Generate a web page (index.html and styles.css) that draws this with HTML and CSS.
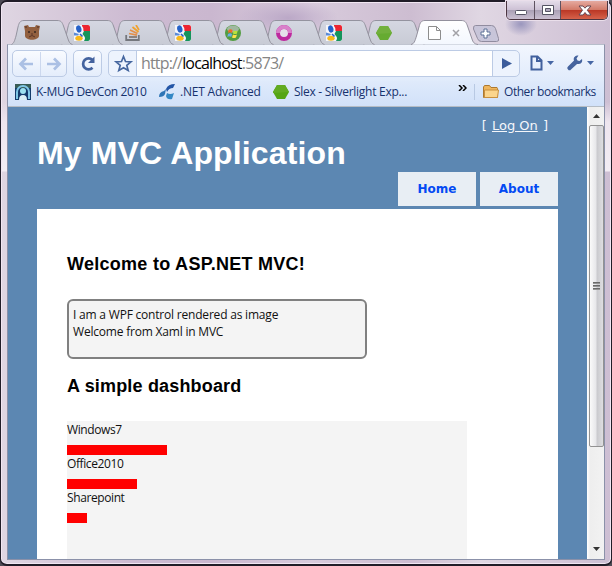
FILE: index.html
```html
<!DOCTYPE html>
<html lang="en">
<head>
<meta charset="utf-8">
<title>My MVC Application</title>
<link rel="stylesheet" href="styles.css">
</head>
<body>
<svg class="defs" width="0" height="0">
  <defs>
    <linearGradient id="tabFill" x2="0" y2="1"><stop stop-color="#d5d7e2"/><stop offset="1" stop-color="#c8cbd5"/></linearGradient>
    <linearGradient id="activeFill" x2="0" y2="1"><stop stop-color="#fff"/><stop offset="1" stop-color="#f3f7fe"/></linearGradient>
    <symbol id="tab" viewBox="0 0 62 25"><path d="M.5 24.5C3 23 3.500 21 5 16L7 7C8 3 9 .5 13 .5H46C50 .5 51 2 52.500 6L57 19C58 22 59 24 61.500 24.500" fill="url(#tabFill)" stroke="#94939f"/></symbol>
    <symbol id="google" viewBox="0 0 16 16"><path fill="#f4f5fa" d="M0 0h16v16H0z"/><path fill="#ed2430" d="M8 0h6a2 2 0 0 1 2 2v4H9.500Q10 3 8 1z"/><path fill="#16945b" d="M10 6h6v8a2 2 0 0 1-2 2h-4q2-3 0-5L8.500 9z"/><path fill="#5b8bd6" d="M0 7.500L5 9 4 10.500H0z"/><ellipse cx="4.800" cy="4" rx="2.600" ry="3.700" transform="rotate(-15 4.800 4)" fill="#2462c9"/><ellipse cx="5" cy="13.200" rx="3.700" ry="2.500" fill="#f8b819"/><path d="M6 9l2.500 2.500" stroke="#2462c9" stroke-width="1.600"/></symbol>
    <symbol id="hex" viewBox="0 0 16 16"><path d="M4 1h8l4 7-4 7H4L0 8z" fill="#55a514"/><path d="M4 1h8l4 7L0 9V8z" fill="#62ab22"/></symbol>
  </defs>
</svg>
<div class="window">
  <div class="controls">
    <span class="ctl"><svg width="27" height="18"><rect x="8.500" y="9.500" width="11" height="4" rx="1" fill="#fff" stroke="#555463"/></svg></span>
    <span class="ctl mid"><svg width="25" height="18"><path d="M7.500 4.500h11v9h-11z" fill="#fff" stroke="#555463"/><path d="M10.500 7.500h5v3h-5z" fill="#b0a8bd" stroke="#555463"/></svg></span>
    <span class="ctl close"><svg width="46" height="18"><path d="M18 5h4l2 2.200L26 5h4l-3.700 4.200L30 14h-4l-2-2.500L22 14h-4l3.500-4.800z" fill="#fff" stroke="#654653"/></svg></span>
  </div>
  <div class="tabs">
    <div class="tab t1"><svg class="shape"><use href="#tab"/></svg><svg class="icon" viewBox="0 0 16 16"><path d="M0 1l4-1 1 2h6l1-2 4 1-1 5v5c-1 5-13 5-14 0V6z" fill="#92603f"/><path d="M1 2h2M13 2h2" stroke="#4e3228"/><circle cx="5" cy="7" r="1" fill="#392720"/><circle cx="11" cy="7" r="1" fill="#392720"/><path d="M5 12q3-3 6 0M7 9h2" fill="none" stroke="#5a3428"/></svg></div>
    <div class="tab t2"><svg class="shape"><use href="#tab"/></svg><svg class="icon"><use href="#google"/></svg></div>
    <div class="tab t3"><svg class="shape"><use href="#tab"/></svg><svg class="icon" viewBox="0 0 16 16"><path d="M1.200 10v5h12.600v-5" fill="none" stroke="#75777d" stroke-width="1.800"/><path d="M4 12h8" stroke="#8c827c" stroke-width="2"/><path d="M4 8.500l8 1.700M5 5l7.500 3.500" stroke="#e4904a" stroke-width="1.700"/><path d="M7.500 2l6 5M11 0l3 5" stroke="#f0a12d" stroke-width="1.700"/></svg></div>
    <div class="tab t4"><svg class="shape"><use href="#tab"/></svg><svg class="icon"><use href="#google"/></svg></div>
    <div class="tab t5"><svg class="shape"><use href="#tab"/></svg><svg class="icon" viewBox="0 0 16 16"><circle cx="8" cy="8" r="8" fill="#549d42"/><ellipse cx="8" cy="4" rx="6" ry="3.500" fill="#a0b8a0"/><path d="M3.500 5q2-1.500 4 0L7 8q-2-1.300-4 0z" fill="#ef6a28"/><path d="M8.500 5.500q2 1 4 0L12 8.500q-2 1-4 0z" fill="#b9e33a"/><path d="M3 9q2-1.500 4 0l-.7 3q-2-1.300-4 0z" fill="#6aace8"/><path d="M8 9.500q2 1 4 0l-1 3q-2 1-4 0z" fill="#fde14c"/></svg></div>
    <div class="tab t6"><svg class="shape"><use href="#tab"/></svg><svg class="icon" viewBox="0 0 16 16"><circle cx="8" cy="8" r="6" fill="#e5e0ea" stroke="#bd299e" stroke-width="4"/><path d="M2 8a6 6 0 0 1 12 0" fill="none" stroke="#d980ca" stroke-width="4"/></svg></div>
    <div class="tab t7"><svg class="shape"><use href="#tab"/></svg><svg class="icon"><use href="#google"/></svg></div>
    <div class="tab t8"><svg class="shape"><use href="#tab"/></svg><svg class="icon faded"><use href="#hex"/></svg></div>
    <div class="tab active"><svg class="shape" viewBox="0 0 67 25"><path d="M0 24.500C3 24 4 21 5.500 16L8 7C9 3 10 .5 14 .5H50C54 .5 55 2 56.500 6L61 19C62 22 63 24 67 24.500" fill="url(#activeFill)" stroke="#92909d"/></svg><svg class="icon" viewBox="0 0 16 16"><path d="M2.500 1.500h8l4 4v9h-12zM10.500 1.500v4h4" fill="#fff" stroke="#8d8d8d"/></svg><svg class="x" viewBox="0 0 8 8"><path d="M1 1l6 6M7 1L1 7" stroke="#a2a2a7" stroke-width="1.500"/></svg></div>
    <svg class="plus" viewBox="0 0 26 17"><path d="M2.500.5h16q3 0 4 3l3 10q1 3-2 3h-15q-3 0-4-3L.5 4Q0 .5 2.500.5z" fill="#c8c5d9" stroke="#918c9f"/><path d="M11 4h3v3h3v3h-3v3h-3v-3H8V7h3z" fill="#fff" stroke="#5c7196"/></svg>
  </div>
  <div class="client">
    <div class="toolbar">
      <div class="button nav"><svg width="55" height="26"><path d="M27.500 1v24" stroke="#ccd8ee"/><path d="M20 13H8M13 7.500L7.500 13l5.500 5.500M34 13h12M41 7.500l5.500 5.500-5.500 5.500" fill="none" stroke="#abc0e4" stroke-width="2.700"/></svg></div>
      <div class="button reload"><svg width="28" height="26"><path d="M18.500 16.800A5.500 5.500 0 1 1 18.500 9" fill="none" stroke="#44639f" stroke-width="2.700"/><path d="M20.500 5.500V12H14z" fill="#44639f"/></svg></div>
      <div class="omnibox">
        <span class="star"><svg width="28" height="25"><path d="M14.500 5.500l2 5 5.500.3-4.200 3.600 1.400 5.100-4.700-2.800-4.700 2.800 1.400-5.100L7 10.800l5.500-.3z" fill="none" stroke="#46679f" stroke-width="1.700"/></svg></span>
        <span class="url"><i>http://</i><b>localhost</b><i>:5873/</i></span>
        <span class="go"><svg width="27" height="25"><path d="M9 7l10 5.500L9 18z" fill="#3c5c9b"/></svg></span>
      </div>
      <svg class="menus" width="70" height="26"><path d="M5.500 6.500h6l4 4v9h-10zM11 7v4h4.500" fill="none" stroke="#41609d" stroke-width="2"/><path d="M21 11h7l-3.500 4z" fill="#4767a5"/><path d="M42 19.500a2 2 0 0 1 0-3l6-6c-1-3 1-5 4.500-5l-2 3 1 2 2 .5 2.500-2c1 4-2 5.500-5 5l-6 5.500a2 2 0 0 1-3 0z" fill="#45639e"/><path d="M61 11h7l-3.500 4z" fill="#4767a5"/></svg>
    </div>
    <div class="bookmarks">
      <span class="mark m1"><svg viewBox="0 0 16 16"><path d="M0 0h16v16H0z" fill="#143b6b"/><path d="M0 0h16v4H0z" fill="#385c56"/><path d="M2 15V8a6 6 0 0 1 12 0v7" fill="none" stroke="#7ec6e5" stroke-width="2"/><circle cx="8" cy="7" r="3" fill="#9ce2ef"/><path d="M4 16q0-5 4-5t4 5z" fill="#d9eff5"/></svg><span>K-MUG DevCon 2010</span></span>
      <span class="mark m2"><svg viewBox="0 0 16 16"><path d="M7 5Q9 0 16 0l-2 4q-4 0-6 4z" fill="#2456a6"/><path d="M0 13q0-5 5-6l2-2-1 5q-1 3-6 3z" fill="#2e75b6"/><path d="M8 9q3 2 7 0l-2 6q-5 1-6-3z" fill="#3488c5"/></svg><span>.NET Advanced</span></span>
      <span class="mark m3"><svg><use href="#hex"/></svg><span>Slex - Silverlight Exp...</span></span>
      <svg class="more" viewBox="0 0 9 6"><path d="M1 0l3 3-3 3M5 0l3 3-3 3" fill="none" stroke="#000" stroke-width="1.500"/></svg>
      <span class="mark other"><svg viewBox="0 0 16 16"><path d="M.5 13.500V3l1-1.500h5L8 3.500h6l.5 1v9z" fill="#efb65d" stroke="#ad7930"/><path d="M1.500 13.500V6H15.500l-1 7.500z" fill="#fbd58d" stroke="#c9903f"/></svg><span>Other bookmarks</span></span>
    </div>
    <div class="view">
      <div class="page">
        <div class="login">[ <a>Log On</a> ]</div>
        <h1>My MVC Application</h1>
        <nav><a>Home</a><a>About</a></nav>
        <main>
          <h2>Welcome to ASP.NET MVC!</h2>
          <div class="control"><div>I am a WPF control rendered as image</div><div>Welcome from Xaml in MVC</div></div>
          <h2 class="sub">A simple dashboard</h2>
          <div class="chart">
            <div class="row">Windows7<div class="bar" style="width:100px"></div></div>
            <div class="row">Office2010<div class="bar" style="width:70px"></div></div>
            <div class="row">Sharepoint<div class="bar" style="width:20px"></div></div>
          </div>
        </main>
      </div>
      <div class="scroll">
        <svg class="arrow" viewBox="0 0 7 4"><path d="M0 4l3.500-4L7 4z" fill="#333"/></svg>
        <div class="thumb"><i></i><i></i><i></i></div>
        <svg class="arrow down" viewBox="0 0 7 4"><path d="M0 0h7L3.500 4z" fill="#333"/></svg>
      </div>
    </div>
  </div>
</div>
</body>
</html>
```
FILE: styles.css
```css
* { box-sizing: border-box; }
body { margin: 0; width: 612px; height: 566px; overflow: hidden; background: #4e4b55; font-family: "Open Sans", "Noto Sans", sans-serif; }
svg { display: block; flex: none; }
.defs { position: absolute; }
.window {
  position: relative; width: 612px; height: 566px; padding: 19px 6px 6px;
  border: 1px solid #211d28; border-top-width: 2px; border-bottom-width: 2px; border-radius: 7px;
  box-shadow: inset 0 0 0 1px #f1e6f2;
  background:
    radial-gradient(ellipse 22px 12px at 359px 66px, #8e88b5, transparent),
    radial-gradient(ellipse 50px 18px at 287px 16px, #bba8c7, transparent),
    radial-gradient(ellipse 16px 12px at 520px 22px, #9a96bd, transparent),
    linear-gradient(180deg, transparent 100px, #eee5ee 120px, #f3edf4 169px, transparent 170px),
    linear-gradient(90deg, #dfd6e2, #cdbbd2 130px, #cab7cf 210px, #d8cbdc 310px, #cdbdd1 410px, #e0d7e3 480px, #cdbed3);
}
.controls { position: absolute; right: 3px; top: -1px; display: flex; border: 1px solid #4b3541; border-top: 0; border-radius: 0 0 5px 5px; overflow: hidden; height: 19px; box-shadow: 0 0 0 1px #eadfeb; }
.ctl { background: linear-gradient(#e4dce9, #ccc0d4 50%, #aaa0b5 51%, #cabfd1); }
.mid { border-left: 1px solid #5e5260; border-right: 1px solid #5e5260; }
.close { background: linear-gradient(#e5aaa0, #d27867 50%, #ba3725 51%, #d6624b); }
.tabs { display: flex; height: 25px; padding-left: 4px; margin-top: -1px; position: relative; }
.tab { position: relative; width: 62px; height: 25px; flex: none; margin-right: -11.700px; padding: 5px 0 0 13px; }
.shape { position: absolute; left: 0; top: 0; width: 100%; height: 25px; }
.icon { position: relative; width: 16px; height: 16px; }
.faded { opacity: .85; }
.t1 { z-index: 9; } .t2 { z-index: 8; } .t3 { z-index: 7; } .t4 { z-index: 6; }
.t5 { z-index: 5; } .t6 { z-index: 4; } .t7 { z-index: 3; } .t8 { z-index: 2; }
.active { z-index: 10; width: 67px; display: flex; gap: 10px; margin-left: -3px; margin-right: -4px; padding-left: 15px; }
.x { position: relative; width: 8px; height: 8px; margin-top: 4px; }
.plus { width: 26px; height: 17px; margin: 5px 0 0 -1px; }
.client { height: 516px; margin-top: -1px; border: 1px solid #8b91a9; border-top-color: #b7bdca; background: #d3e3fa; }
.toolbar { display: flex; height: 36px; padding: 5px 0 0 4px; background: linear-gradient(#f2f6fe, #e0ebfb); }
.button { height: 27px; border: 1px solid #bccbe5; border-radius: 5px; background: linear-gradient(#f9fbff, #e4edfb); }
.nav { width: 55px; margin-right: 6px; }
.reload { width: 29px; margin-right: 6px; }
.omnibox { display: flex; width: 412px; height: 27px; border: 1px solid #bccbe5; border-radius: 5px; overflow: hidden; background: #edf3fd; }
.star { width: 28px; border-right: 1px solid #bccbe5; }
.url { flex: 1; background: #fff; padding-left: 4px; font-size: 16px; line-height: 25px; letter-spacing: -.83px; white-space: nowrap; }
.url i { font-style: normal; color: #858585; }
.url b { font-weight: 400; color: #000; }
.go { width: 27px; border-left: 1px solid #bccbe5; }
.menus { margin-left: 6px; }
.bookmarks { display: flex; align-items: center; height: 25px; padding: 0 0 4px 7px; background: linear-gradient(#dfeafb, #d1e1f9); color: #16326e; font-size: 12px; line-height: 16px; white-space: nowrap; }
.mark { display: flex; gap: 5px; }
.mark svg { width: 16px; height: 16px; }
.m1 { width: 144px; letter-spacing: -.36px; }
.m2 { width: 114px; letter-spacing: -.2px; }
.m3 { width: 185px; letter-spacing: -.28px; }
.more { width: 9px; height: 6px; margin-bottom: 8px; margin-right: 7px; }
.other { border-left: 1px solid #b8c9e3; padding-left: 8px; letter-spacing: -.45px; }
.view { display: flex; height: 453px; border-top: 1px solid #b5bcc4; }
.page { width: 579px; height: 452px; padding: 0 29px; background: #5c87b2; overflow: hidden; }
.login { height: 28px; padding: 10px 10px 0 0; text-align: right; color: #f4f6fa; font: 13px/18px "DejaVu Sans", sans-serif; }
.login a { text-decoration: underline; margin: 0 1px; }
h1 { height: 37px; margin: 0; color: #fff; font: bold 32px/37px "Liberation Sans", sans-serif; letter-spacing: .14px; }
nav { display: flex; justify-content: flex-end; gap: 4px; height: 34px; }
nav a { width: 78px; background: #e8eef4; color: #034af3; text-align: center; font: bold 12px/35px "DejaVu Sans", sans-serif; }
main { height: 351px; margin-top: 3px; padding: 44px 30px 0; background: #fff; }
h2 { margin: 0; height: 22px; color: #000; font: bold 18px/22px "Liberation Sans", sans-serif; letter-spacing: .28px; white-space: nowrap; }
.sub { letter-spacing: .17px; }
.control { width: 300px; height: 60px; margin: 24px 0 16px; padding: 5px 4px; border: 2px solid #808080; border-radius: 6px; background: #f4f4f4; color: #111; font-size: 12px; line-height: 17px; letter-spacing: -.2px; }
.chart { width: 400px; height: 139px; margin-top: 24px; background: #f4f4f4; color: #111; font-size: 12px; letter-spacing: -.4px; }
.row { height: 34px; line-height: 18px; }
.bar { height: 10px; margin-top: 6px; background: #f00; }
.scroll { width: 17px; padding-left: 1px; display: flex; flex-direction: column; align-items: center; background: linear-gradient(90deg, #fff, #eee 3px, #f2f2f2); }
.arrow { width: 7px; height: 4px; margin-top: 7px; }
.thumb { width: 15px; height: 322px; margin-top: 7px; border: 1px solid #929292; border-radius: 2px; background: linear-gradient(90deg, #fafafa, #e7e7ea 45%, #cacace 55%, #dedee1); display: flex; flex-direction: column; align-items: center; justify-content: center; gap: 1px; }
.thumb i { width: 7px; height: 2px; background: linear-gradient(#555, #aaa); }
.down { margin-top: auto; margin-bottom: 8px; }
```
